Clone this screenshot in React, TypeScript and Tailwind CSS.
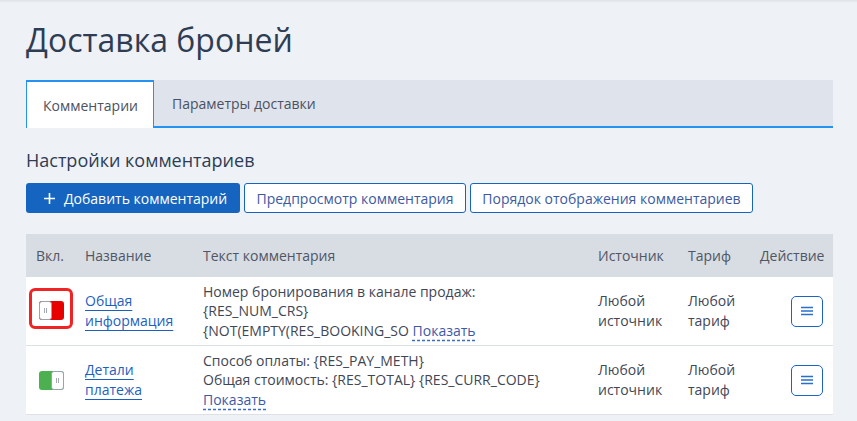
import React from "react";

const cols = "grid grid-cols-[49px_118px_396px_89px_72px_83px]";

function Toggle({ on }: { on: boolean }) {
  return (
    <div
      className={`flex w-[25px] h-[19px] rounded-[3px] ${
        on ? "bg-[#4caf50] justify-end" : "bg-[#e60000] justify-start"
      }`}
    >
      <div className="flex w-[13px] h-full items-center justify-center gap-[1px] rounded-[3px] border border-[#9aa3ae] bg-white">
        <span className="block w-px h-[5px] bg-[#a3aab4]" />
        <span className="block w-px h-[5px] bg-[#a3aab4]" />
      </div>
    </div>
  );
}

function MenuButton() {
  return (
    <button className="flex w-[32px] h-[31px] items-center justify-center rounded-[5px] border-[1.5px] border-[#1d63c0] bg-white">
      <svg width="12" height="10" viewBox="0 0 12 10">
        <path d="M0 1.5h12M0 5h12M0 8.5h12" stroke="#2a6fcc" strokeWidth="1.5" />
      </svg>
    </button>
  );
}

function Show() {
  return (
    <span className="text-[#3d5aa8] underline decoration-dashed decoration-[#3d6cc4] underline-offset-[4px]">
      Показать
    </span>
  );
}

function Row({
  toggle,
  name,
  text,
}: {
  toggle: React.ReactNode;
  name: string[];
  text: React.ReactNode;
}) {
  return (
    <div className={`${cols} h-[69px] items-center border-b border-[#dde1e6] bg-white text-[14px] text-[#3f4756]`}>
      <div className="flex">{toggle}</div>
      <div className="pl-[10px] leading-[20px]">
        {name.map((n) => (
          <div key={n}>
            <span className="text-[#1d5fbf] underline decoration-[#1d5fbf] underline-offset-[4px]">{n}</span>
          </div>
        ))}
      </div>
      <div className="pl-[10px] leading-[19.5px] whitespace-nowrap">{text}</div>
      <div className="pl-[9px] leading-[20px]">
        Любой
        <br />
        источник
      </div>
      <div className="pl-[10px] leading-[20px]">
        Любой
        <br />
        тариф
      </div>
      <div className="flex justify-end pr-[10px]">
        <MenuButton />
      </div>
    </div>
  );
}

export default function App() {
  return (
    <div className="min-h-screen bg-[#eef1f5] font-['Open_Sans',sans-serif]">
      <div className="h-[3px] bg-gradient-to-b from-[#dde2e7] to-[#eef1f5]" />
      <div className="pl-[26px] pr-[24px]">
        <h1 className="mt-[15px] text-[32px] leading-[44px] text-[#2e3d54]">Доставка броней</h1>

        {/* Tabs */}
        <div className="mt-[18px] flex h-[48px] bg-[#dfe3eb] text-[14px]">
          <div className="flex w-[128px] items-center border-x border-t-2 border-[#2392f0] bg-white pl-[16px] text-[#4b5263]">
            Комментарии
          </div>
          <div className="flex flex-1 items-center border-b-2 border-[#2392f0] pl-[18px] text-[#4b5263]">
            Параметры доставки
          </div>
        </div>

        <h2 className="mt-[20px] text-[18px] leading-[24px] text-[#2e3d54]">Настройки комментариев</h2>

        {/* Buttons */}
        <div className="mt-[11px] flex gap-[4px] text-[14px]">
          <button className="flex h-[30px] w-[214px] items-center gap-[9px] rounded-[3px] bg-[#1565c0] pl-[18px] font-medium text-white">
            <svg width="11" height="11" viewBox="0 0 11 11">
              <path d="M5.5 0v11M0 5.5h11" stroke="white" strokeWidth="1.6" />
            </svg>
            Добавить комментарий
          </button>
          <button className="h-[30px] w-[222px] rounded-[3px] border border-[#1565c0] bg-white text-[#3c5aa0]">
            Предпросмотр комментария
          </button>
          <button className="h-[30px] w-[283px] rounded-[3px] border border-[#1565c0] bg-white text-[#3c5aa0]">
            Порядок отображения комментариев
          </button>
        </div>

        {/* Table */}
        <div className="mt-[21px] w-[807px]">
          <div className={`${cols} h-[43px] items-center bg-[#d8dce3] text-[14px] text-[#4f5766]`}>
            <div className="pl-[10px]">Вкл.</div>
            <div className="pl-[10px]">Название</div>
            <div className="pl-[10px]">Текст комментария</div>
            <div className="pl-[9px]">Источник</div>
            <div className="pl-[10px]">Тариф</div>
            <div className="pl-[10px]">Действие</div>
          </div>
          <Row
            toggle={
              <div className="ml-[3px] mt-[-6px] flex h-[41px] w-[44px] items-start rounded-[6px] border-[3px] border-[#f02424] pl-[7px] pt-[10px]">
                <Toggle on={false} />
              </div>
            }
            name={["Общая", "информация"]}
            text={
              <>
                Номер бронирования в канале продаж:
                <br />
                {"{RES_NUM_CRS}"}
                <br />
                {"{NOT(EMPTY(RES_BOOKING_SO "}
                <Show />
              </>
            }
          />
          <Row
            toggle={
              <div className="ml-[13px]">
                <Toggle on />
              </div>
            }
            name={["Детали", "платежа"]}
            text={
              <>
                {"Способ оплаты: {RES_PAY_METH}"}
                <br />
                {"Общая стоимость: {RES_TOTAL} {RES_CURR_CODE}"}
                <br />
                <Show />
              </>
            }
          />
        </div>
      </div>
    </div>
  );
}
